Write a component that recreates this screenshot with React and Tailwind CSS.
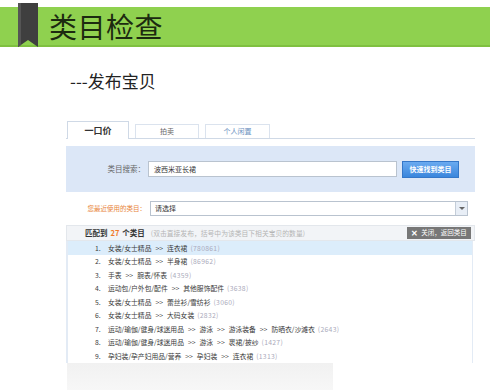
import React from "react";

const rows = [
  ["女装/女士精品 >> 连衣裙", "780861"],
  ["女装/女士精品 >> 半身裙", "86962"],
  ["手表 >> 腕表/怀表", "4359"],
  ["运动包/户外包/配件 >> 其他服饰配件", "3638"],
  ["女装/女士精品 >> 蕾丝衫/雪纺衫", "3060"],
  ["女装/女士精品 >> 大码女装", "2832"],
  ["运动/瑜伽/健身/球迷用品 >> 游泳 >> 游泳装备 >> 防晒衣/沙滩衣", "2643"],
  ["运动/瑜伽/健身/球迷用品 >> 游泳 >> 裹裙/披纱", "1427"],
  ["孕妇装/孕产妇用品/营养 >> 孕妇装 >> 连衣裙", "1313"],
];

const font = { fontFamily: '"Noto Sans CJK SC", "Noto Sans", sans-serif' };

function Path({ text }) {
  const parts = text.split(" >> ");
  return (
    <span className="flex items-center">
      {parts.map((p, i) => (
        <React.Fragment key={i}>
          {i > 0 && <span className="mx-[4px]">&gt;&gt;</span>}
          <span>{p}</span>
        </React.Fragment>
      ))}
    </span>
  );
}

export default function App() {
  return (
    <div
      className="w-[490px] h-[390px] bg-white overflow-hidden relative"
      style={font}
    >
      {/* Header band */}
      <div className="relative mt-[7px] h-[40px] bg-[#8fd14f] border-b-2 border-[#7fc040] flex items-center">
        <svg
          className="absolute left-[18px] top-[-4px]"
          width="20"
          height="44"
          viewBox="0 0 20 44"
        >
          <polygon points="0,0 20,0 20,44 10,37 0,44" fill="#3f3f3f" />
          <polygon points="0,0 3,0 3,42 0,44" fill="#555" />
        </svg>
        <div className="ml-[49px] text-[28px] leading-none text-[#1c2a10] tracking-[0.5px]">
          类目检查
        </div>
      </div>

      {/* Subtitle */}
      <div className="ml-[70px] mt-[24px] text-[17px] leading-[20px] text-[#222]">
        ---发布宝贝
      </div>

      {/* Panel */}
      <div className="ml-[66px] w-[409px] mt-[30px]">
        {/* Tabs */}
        <div className="flex items-end h-[18px] border-b border-[#cfd9e6] gap-[6px] pl-[1px]">
          <div className="w-[62px] h-[18px] bg-white border border-b-0 border-[#cfd9e6] -mb-px flex items-center justify-center text-[9px] font-bold text-[#333]">
            一口价
          </div>
          <div className="w-[64px] h-[14px] border border-b-0 border-[#dbe3ee] flex items-center justify-center text-[7px] text-[#666]">
            拍卖
          </div>
          <div className="w-[65px] h-[14px] border border-b-0 border-[#dbe3ee] flex items-center justify-center text-[7px] text-[#6a8fc0]">
            个人闲置
          </div>
        </div>

        {/* Search panel */}
        <div className="mt-[7px] h-[46px] bg-[#dce7f7] flex items-center">
          <div className="w-[82px] text-right text-[7.5px] text-[#666] pr-[3px]">
            类目搜索：
          </div>
          <div className="w-[249px] h-[16px] bg-white border border-[#b9c3cf] flex items-center pl-[5px] text-[7px] text-[#333]">
            波西米亚长裙
          </div>
          <div className="ml-[5px] w-[57px] h-[17px] bg-gradient-to-b from-[#6aaaf0] to-[#3a86dc] border border-[#3577c8] flex items-center justify-center text-[7px] font-bold text-white">
            快速找到类目
          </div>
        </div>

        {/* Recent */}
        <div className="mt-[9px] h-[15px] flex items-center">
          <div className="w-[84px] text-right text-[6.5px] text-[#e8843a] pr-[4px]">
            您最近使用的类目：
          </div>
          <div className="w-[318px] h-[15px] bg-white border border-[#b9c3cf] flex items-center justify-between pl-[4px] text-[7px] text-[#333]">
            <span>请选择</span>
            <div className="w-[12px] h-[13px] bg-[#e8eef6] border-l border-[#c4cdd8] flex items-center justify-center">
              <svg width="6" height="4" viewBox="0 0 6 4">
                <polygon points="0,0 6,0 3,3" fill="#666" />
              </svg>
            </div>
          </div>
        </div>

        {/* Match bar */}
        <div className="mt-[9px] h-[16px] bg-[#f2f4f7] border border-[#e3e7ec] flex items-center justify-between pl-[18px] pr-[3px]">
          <div className="text-[7.5px] text-[#333] flex items-center gap-[3px]">
            <span className="font-bold">匹配到</span>
            <span className="font-bold text-[#f07a2a]">27</span>
            <span className="font-bold">个类目</span>
            <span className="text-[#b5b5b5] text-[6.8px] ml-[3px]">
              (双击直接发布，括号中为该类目下相关宝贝的数量)
            </span>
          </div>
          <div className="h-[12px] w-[64px] bg-[#777] flex items-center justify-center gap-[3px] text-[6.5px] text-white">
            <span className="font-bold text-[8px] leading-none">✕</span>
            <span>关闭，返回类目</span>
          </div>
        </div>

        {/* List */}
        <div className="w-[407px] border-l-2 border-r border-[#e3ebf5]">
          {rows.map(([t, n], i) => (
            <div
              key={i}
              className={
                "h-[13.5px] flex items-center pl-[27px] text-[6.8px] text-[#3a3a3a] whitespace-nowrap " +
                (i === 0 ? "bg-[#dcedfb]" : "")
              }
            >
              <span className="w-[13px]">{i + 1}.</span>
              <Path text={t} />
              <span className="ml-[3px] text-[#aab] tracking-[0.3px]">({n})</span>
            </div>
          ))}
        </div>
      </div>

      {/* bottom fade */}
      <div className="ml-[67px] w-[266px] h-[40px] bg-gradient-to-b from-[#f1f1f1] to-[#fafafa]" />
    </div>
  );
}
